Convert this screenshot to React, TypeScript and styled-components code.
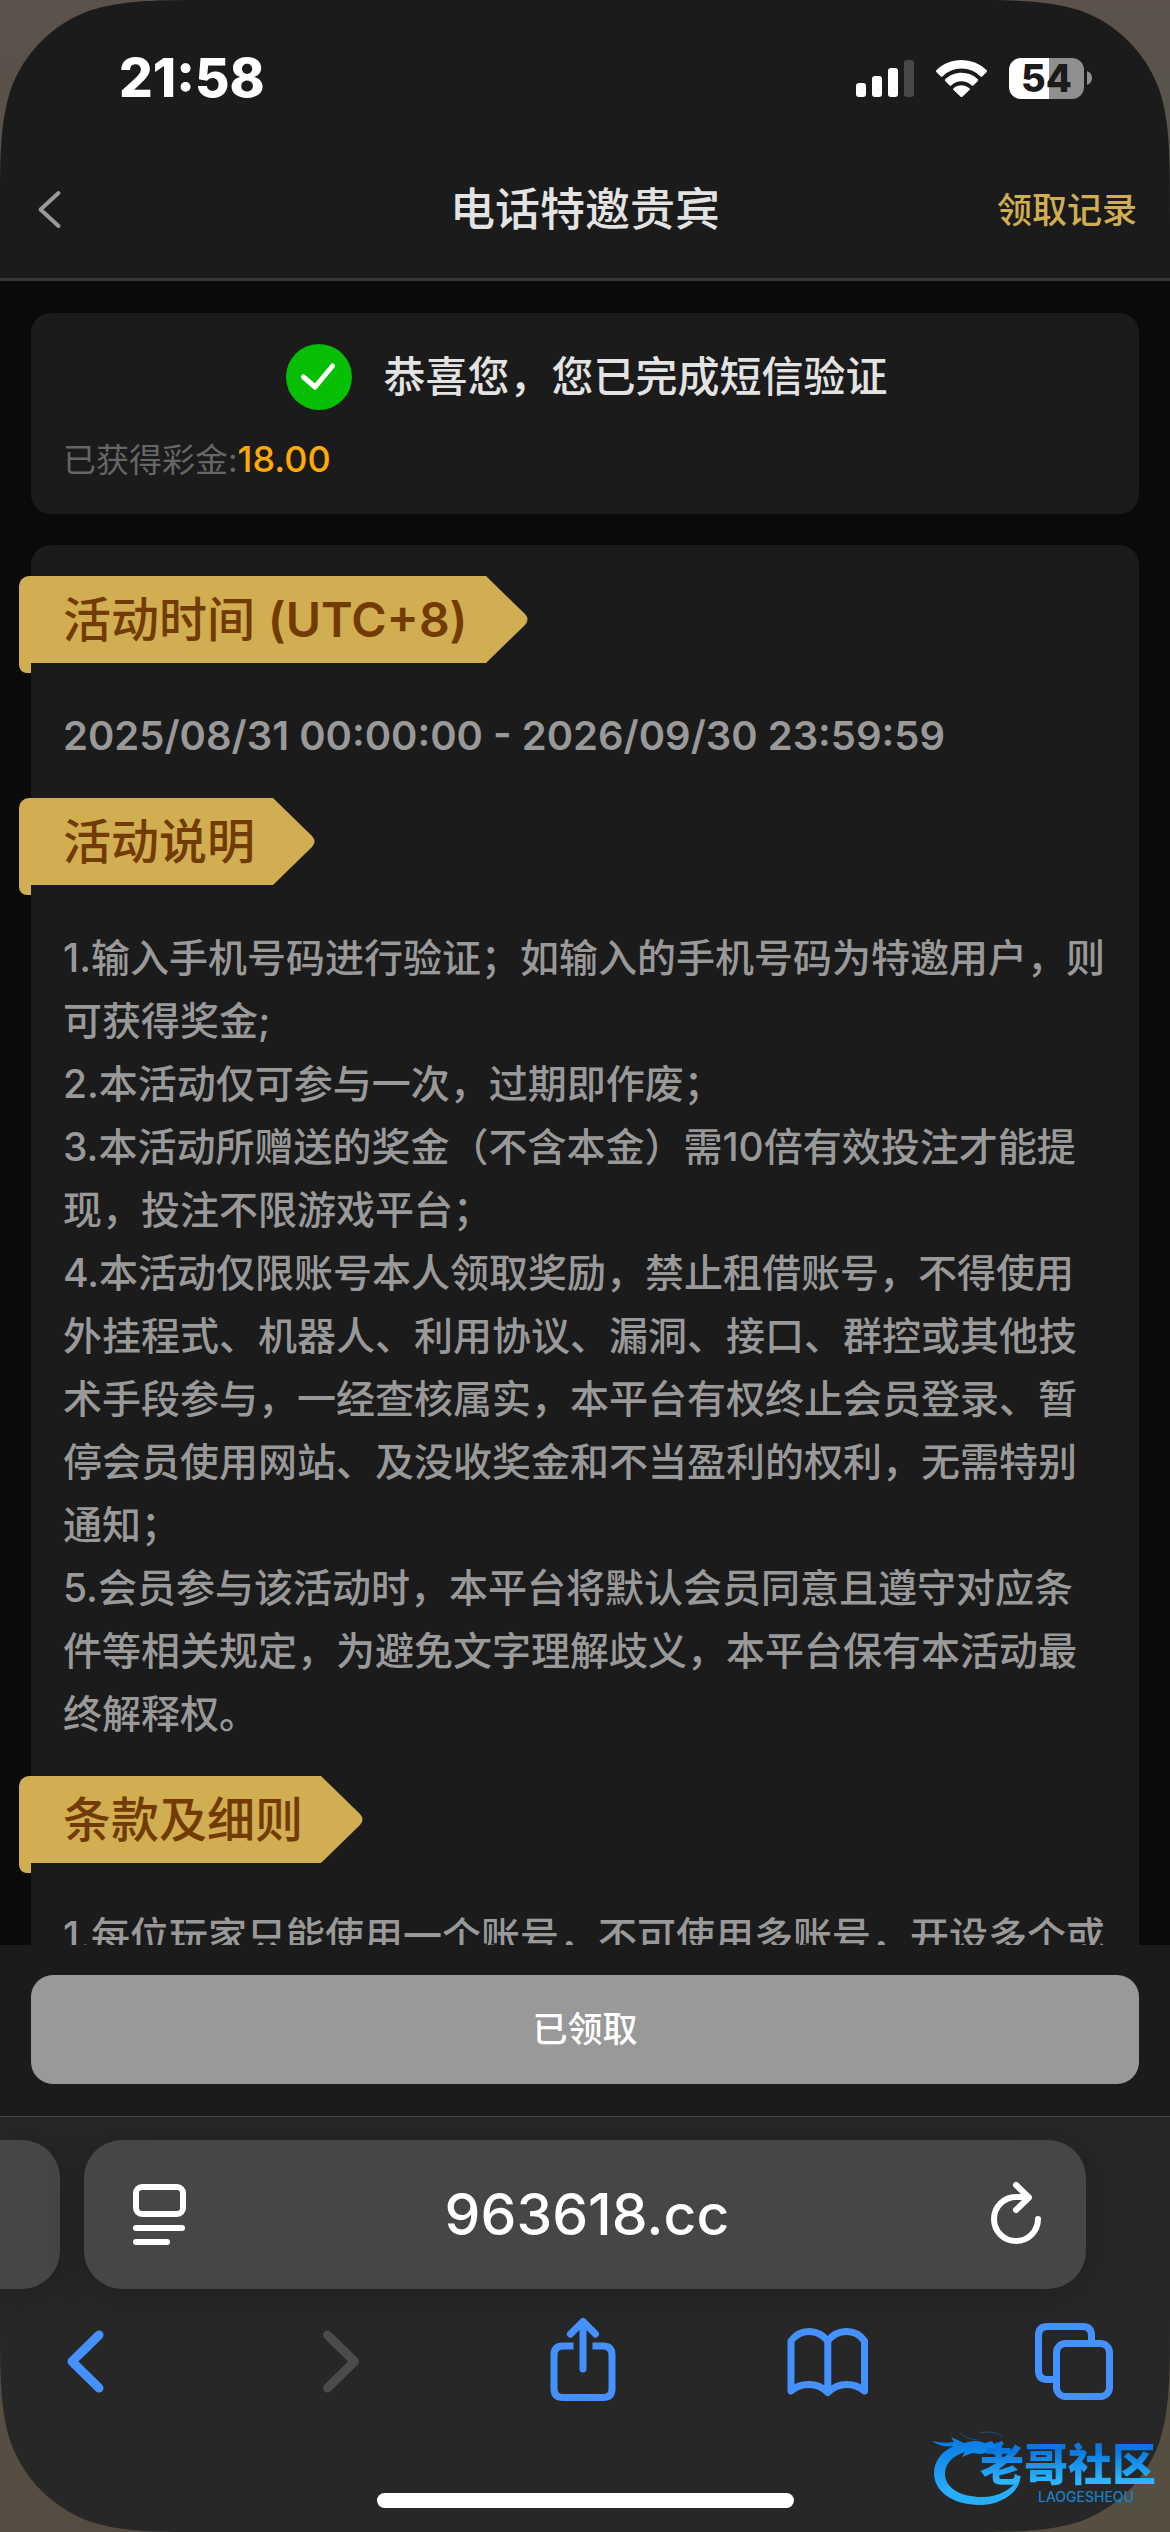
import React from 'react';
import styled, { createGlobalStyle } from 'styled-components';

const font = `Inter, "Noto Sans CJK SC", sans-serif`;

const GlobalStyle = createGlobalStyle`
  * { box-sizing: border-box; }
  html, body { margin: 0; padding: 0; background: #0a0a0a; }
  body { font-family: ${font}; font-weight: 500; -webkit-font-smoothing: antialiased; }
  button { font: inherit; border: 0; padding: 0; background: none; cursor: pointer; }
  h1, h2, p { margin: 0; font-weight: 500; }
  svg { display: block; flex: none; }
`;

const Screen = styled.div`
  position: relative;
  display: flex;
  flex-direction: column;
  height: 100vh;
  overflow: hidden;
  background: #0a0a0a;
`;

const StatusBar = styled.div`
  display: flex;
  justify-content: space-between;
  align-items: center;
  height: 144px;
  padding: 12px 78px 0 119px;
  background: #1b1b1b;
  color: #fff;
`;

const Clock = styled.time`
  font-size: 53px;
  font-weight: 800;
  line-height: 60px;
`;

const StatusIcons = styled.div`
  display: flex;
  align-items: center;
  gap: 22px;
`;

const Battery = styled.div`
  display: flex;
  align-items: center;
  gap: 3px;
`;

const BatteryBody = styled.div`
  width: 75px;
  height: 41px;
  border-radius: 12px;
  background: linear-gradient(to right, #fff 54%, #8f8f8f 54%);
  color: #1b1b1b;
  font-size: 38px;
  font-weight: 800;
  line-height: 41px;
  text-align: center;
`;

const NavBar = styled.header`
  display: grid;
  grid-template-columns: 1fr auto 1fr;
  align-items: center;
  height: 137px;
  padding: 0 33px 2px;
  border-bottom: 3px solid #363636;
  background: #1b1b1b;
`;

const BackButton = styled.button`
  justify-self: start;
`;

const Title = styled.h1`
  color: #e3e3e3;
  font-size: 45px;
  line-height: 60px;
`;

const RecordsLink = styled.a`
  justify-self: end;
  color: #d0ae51;
  font-size: 35px;
  line-height: 48px;
  text-decoration: none;
`;

const Content = styled.main`
  flex: 1;
  min-height: 0;
  overflow: hidden;
  display: flex;
  flex-direction: column;
  gap: 31px;
  padding: 32px 31px 0;
`;

const Card = styled.section`
  flex: none;
  padding: 31px 28px 32px 32px;
  border-radius: 20px;
  background: #1b1b1b;
`;

const Success = styled.div`
  display: flex;
  justify-content: center;
  align-items: center;
  gap: 31px;
  height: 66px;
  color: #e3e3e3;
  font-size: 42px;
  line-height: 60px;
`;

const Bonus = styled.p`
  margin-top: 28px;
  color: #666;
  font-size: 33px;
  font-weight: 400;
  line-height: 44px;
`;

const Amount = styled.span`
  color: #ffaa09;
  font-size: 36px;
  font-weight: 500;
  line-height: 36px;
`;

const Ribbon = styled.h2`
  position: relative;
  width: fit-content;
  height: 87px;
  margin: 0 0 41px -44px;
  padding: 0 18px 0 44px;
  border-top-left-radius: 10px;
  background: #d0ae51;
  color: #713b03;
  font-size: 48px;
  line-height: 87px;
  white-space: nowrap;

  &::after {
    content: '';
    position: absolute;
    left: 0;
    top: 80px;
    width: 12px;
    height: 17px;
    border-radius: 0 0 0 8px;
    background: #d0ae51;
  }
`;

const RibbonTip = styled.svg`
  position: absolute;
  left: 100%;
  top: 0;
`;

const Zone = styled.span`
  font-weight: 600;
`;

const Copy = styled.div`
  margin-bottom: 31px;
  color: #999;
  font-size: 39px;
  line-height: 63px;
`;

const Period = styled(Copy)`
  font-size: 40px;
  font-weight: 600;
`;

const ActionBar = styled.footer`
  flex: none;
  padding: 30px 31px 32px;
  background: #1b1b1b;
`;

const ClaimButton = styled.button`
  width: 100%;
  height: 109px;
  border-radius: 22px;
  background: #999;
  color: #fff;
  font-size: 35px;
  font-weight: 500;
  line-height: 109px;
`;

const Browser = styled.div`
  flex: none;
  padding-top: 23px;
  border-top: 1px solid #444;
  background: #272727;
`;

const TabStrip = styled.div`
  display: flex;
  gap: 24px;
  padding-right: 84px;
`;

const Pill = styled.div`
  height: 149px;
  background: #464646;
  box-shadow: 0 4px 40px rgba(0, 0, 0, 0.22);
`;

const PreviousTab = styled(Pill)`
  width: 60px;
  border-radius: 0 38px 38px 0;
`;

const AddressBar = styled(Pill)`
  flex: 1;
  display: grid;
  grid-template-columns: 1fr auto 1fr;
  align-items: center;
  padding: 0 42px 0 46px;
  border-radius: 38px;
`;

const AddressButton = styled.button<{ $end?: boolean }>`
  justify-self: ${(p) => (p.$end ? 'end' : 'start')};
`;

const Address = styled.span`
  color: #fff;
  font-size: 57px;
  line-height: 70px;
`;

const Toolbar = styled.nav`
  display: flex;
  justify-content: space-between;
  padding: 27px 52px 0 41px;
`;

const ToolButton = styled.button<{ $dim?: boolean }>`
  width: 88px;
  height: 88px;
  color: ${(p) => (p.$dim ? '#4b4b4b' : '#4591ff')};
`;

const HomeIndicator = styled.div`
  width: 417px;
  height: 15px;
  margin: 89px auto 24px;
  border-radius: 8px;
  background: #fff;
`;

const Corner = styled.svg<{ $v: 'top' | 'bottom'; $h: 'left' | 'right' }>`
  position: absolute;
  ${(p) => p.$v}: 0;
  ${(p) => p.$h}: 0;
  transform: scale(${(p) => (p.$h === 'left' ? 1 : -1)}, ${(p) => (p.$v === 'top' ? 1 : -1)});
  pointer-events: none;
`;

const Watermark = styled.div`
  position: absolute;
  right: 14px;
  bottom: 26px;
  width: 224px;
  height: 78px;
`;

const Dragon = styled.svg`
  position: absolute;
  inset: 0;
`;

const WatermarkText = styled.div`
  position: relative;
  display: flex;
  flex-direction: column;
  align-items: flex-end;
  padding-top: 14px;
`;

const WatermarkName = styled.span`
  background: linear-gradient(#0a78e0 20%, #2cb6ff 85%);
  background-clip: text;
  color: transparent;
  font-size: 44px;
  font-weight: 900;
  line-height: 46px;
`;

const WatermarkLatin = styled.span`
  margin-right: 22px;
  color: #1c7fc4;
  font-size: 14px;
  line-height: 18px;
`;

const line = {
  fill: 'none',
  stroke: 'currentColor',
  strokeLinecap: 'round' as const,
  strokeLinejoin: 'round' as const,
};

function ScreenCorner({ v, h, from, to }: { v: 'top' | 'bottom'; h: 'left' | 'right'; from: string; to: string }) {
  const id = `corner-${v}-${h}`;
  return (
    <Corner $v={v} $h={h} width="217" height="217" viewBox="0 0 217 217" aria-hidden="true">
      <defs>
        <linearGradient id={id} x1="0" y1="0" x2="0" y2="1">
          <stop offset="0" stopColor={from} />
          <stop offset="0.5" stopColor={to} />
        </linearGradient>
      </defs>
      <path
        fill={`url(#${id})`}
        d="M0 0H217C154.6 0 123.3 0 89.7 10.6C52.9 24 24 52.9 10.6 89.7C0 123.3 0 154.6 0 217Z"
      />
    </Corner>
  );
}

function SectionRibbon({ children }: { children: React.ReactNode }) {
  return (
    <Ribbon>
      {children}
      <RibbonTip width="42" height="87" viewBox="0 0 42 87" aria-hidden="true">
        <path fill="#d0ae51" d="M-1 0H0L39 38Q44 43.500 39 49L0 87H-1Z" />
      </RibbonTip>
    </Ribbon>
  );
}

const rules = [
  '1.输入手机号码进行验证；如输入的手机号码为特邀用户，则可获得奖金;',
  '2.本活动仅可参与一次，过期即作废；',
  '3.本活动所赠送的奖金（不含本金）需10倍有效投注才能提现，投注不限游戏平台；',
  '4.本活动仅限账号本人领取奖励，禁止租借账号，不得使用外挂程式、机器人、利用协议、漏洞、接口、群控或其他技术手段参与，一经查核属实，本平台有权终止会员登录、暂停会员使用网站、及没收奖金和不当盈利的权利，无需特别通知；',
  '5.会员参与该活动时，本平台将默认会员同意且遵守对应条件等相关规定，为避免文字理解歧义，本平台保有本活动最终解释权。',
];

export default function App() {
  return (
    <Screen lang="zh-CN">
      <GlobalStyle />
      <StatusBar>
        <Clock>21:58</Clock>
        <StatusIcons>
          <svg width="58" height="37" viewBox="0 0 58 37" fill="#fff" aria-hidden="true">
            <rect x="0" y="23" width="10" height="14" rx="3" />
            <rect x="16" y="16" width="10" height="21" rx="3" />
            <rect x="32" y="8" width="10" height="29" rx="3" />
            <rect x="48" y="0" width="10" height="37" rx="3" fill="#484848" />
          </svg>
          <svg width="51" height="37" viewBox="0 0 51 37" fill="#fff" aria-hidden="true">
            <path d="M25.500 0C15.800 0 7 3.800.6 10a1.500 1.500 0 0 0 0 2.200l4 4a1.500 1.500 0 0 0 2.100 0A27 27 0 0 1 25.500 8.500a27 27 0 0 1 18.800 7.700 1.500 1.500 0 0 0 2.100 0l4-4a1.500 1.500 0 0 0 0-2.200A36 36 0 0 0 25.500 0Z" />
            <path d="M25.500 12.700c-6.200 0-11.900 2.400-16.100 6.300a1.500 1.500 0 0 0 0 2.200l4 4a1.500 1.500 0 0 0 2.100 0 14.600 14.600 0 0 1 20 0 1.500 1.500 0 0 0 2.100 0l4-4a1.500 1.500 0 0 0 0-2.200 23.600 23.600 0 0 0-16.100-6.300Z" />
            <path d="M25.500 25.300c-2.900 0-5.500 1-7.600 2.700a1.500 1.500 0 0 0-.1 2.300l6.600 6.300a1.500 1.500 0 0 0 2.200 0l6.600-6.300a1.500 1.500 0 0 0-.1-2.300 12 12 0 0 0-7.600-2.700Z" />
          </svg>
          <Battery>
            <BatteryBody>54</BatteryBody>
            <svg width="5" height="14" viewBox="0 0 5 14" aria-hidden="true">
              <path d="M0 0Q5 2 5 7T0 14Z" fill="#8f8f8f" />
            </svg>
          </Battery>
        </StatusIcons>
      </StatusBar>

      <NavBar>
        <BackButton aria-label="返回">
          <svg width="32" height="44" viewBox="0 0 32 44" stroke="#999" fill="none" strokeWidth="4" strokeLinecap="round" strokeLinejoin="round">
            <path d="M25.500 5L7.500 21.500L25.500 38" />
          </svg>
        </BackButton>
        <Title>电话特邀贵宾</Title>
        <RecordsLink href="#records">领取记录</RecordsLink>
      </NavBar>

      <Content>
        <Card>
          <Success>
            <svg width="66" height="66" viewBox="0 0 66 66" aria-hidden="true">
              <circle cx="33" cy="33" r="33" fill="#06bf04" />
              <path d="M17.500 33L29 43L46.500 22" fill="none" stroke="#fff" strokeWidth="5" strokeLinecap="round" strokeLinejoin="round" />
            </svg>
            <span>恭喜您，您已完成短信验证</span>
          </Success>
          <Bonus>
            已获得彩金:<Amount>18.00</Amount>
          </Bonus>
        </Card>

        <Card>
          <SectionRibbon>
            活动时间 <Zone>(UTC+8)</Zone>
          </SectionRibbon>
          <Period>2025/08/31 00:00:00 - 2026/09/30 23:59:59</Period>
          <SectionRibbon>活动说明</SectionRibbon>
          <Copy>
            {rules.map((rule) => (
              <p key={rule}>{rule}</p>
            ))}
          </Copy>
          <SectionRibbon>条款及细则</SectionRibbon>
          <Copy>
            <p>1.每位玩家只能使用一个账号，不可使用多账号，开设多个或</p>
          </Copy>
        </Card>
      </Content>

      <ActionBar>
        <ClaimButton>已领取</ClaimButton>
      </ActionBar>

      <Browser>
        <TabStrip>
          <PreviousTab />
          <AddressBar>
            <AddressButton aria-label="页面菜单">
              <svg width="60" height="68" viewBox="0 0 60 68" {...line} stroke="#fff" strokeWidth="6">
                <rect x="6" y="6" width="47" height="27" rx="6" />
                <path d="M6 47H52M6 61H37" />
              </svg>
            </AddressButton>
            <Address>963618.cc</Address>
            <AddressButton $end aria-label="重新载入">
              <svg width="56" height="68" viewBox="0 0 56 68" {...line} stroke="#fff" strokeWidth="6">
                <path d="M50 38A22 22 0 1 1 28 16H40M28 4L41 16.500L28 29" />
              </svg>
            </AddressButton>
          </AddressBar>
        </TabStrip>
        <Toolbar>
          <ToolButton aria-label="后退">
            <svg width="88" height="88" viewBox="0 0 88 88" {...line} strokeWidth="9">
              <path d="M58 19L31 45.500L58 72" />
            </svg>
          </ToolButton>
          <ToolButton $dim aria-label="前进">
            <svg width="88" height="88" viewBox="0 0 88 88" {...line} strokeWidth="9">
              <path d="M39.500 19L66.500 45.500L39.500 72" />
            </svg>
          </ToolButton>
          <ToolButton aria-label="分享">
            <svg width="88" height="88" viewBox="0 0 88 88" {...line} strokeWidth="7">
              <path strokeLinecap="butt" d="M37.500 30H27Q18 30 18 39V72.500Q18 81.500 27 81.500H67Q76 81.500 76 72.500V39Q76 30 67 30H56.500" />
              <path d="M47 53V6M34.500 18L47 5.500L59.500 18" />
            </svg>
          </ToolButton>
          <ToolButton aria-label="书签">
            <svg width="88" height="88" viewBox="0 0 88 88" {...line} strokeWidth="7">
              <path d="M8 75V25Q15 15.500 26 15.500T44.800 25Q52 15.500 63.500 15.500T81.500 25V75Q74 68.500 63.500 68.500T44.800 76.500Q37 68.500 26 68.500T8 75ZM44.800 25V76" />
            </svg>
          </ToolButton>
          <ToolButton aria-label="标签页">
            <svg width="88" height="88" viewBox="0 0 88 88" {...line} strokeWidth="7">
              <path strokeLinecap="butt" d="M61.500 27V19.500Q61.500 10.500 52.500 10.500H17.500Q8.500 10.500 8.500 19.500V54.500Q8.500 63.500 17.500 63.500H26" />
              <rect x="26.500" y="27.500" width="53" height="53" rx="9" />
            </svg>
          </ToolButton>
        </Toolbar>
        <HomeIndicator />
      </Browser>

      <ScreenCorner v="top" h="left" from="#5a524b" to="#5a5149" />
      <ScreenCorner v="top" h="right" from="#5c514c" to="#57544b" />
      <ScreenCorner v="bottom" h="left" from="#544b41" to="#564d43" />
      <ScreenCorner v="bottom" h="right" from="#564e41" to="#574e42" />

      <Watermark>
        <Dragon width="224" height="78" viewBox="0 0 224 78" aria-hidden="true">
          <defs>
            <linearGradient id="dragon" x1="0" y1="0" x2="0" y2="1">
              <stop offset="0.1" stopColor="#0b7fe6" />
              <stop offset="0.8" stopColor="#27aefc" />
            </linearGradient>
          </defs>
          <path
            fill="url(#dragon)"
            d="M0 13Q12 16 22 14L19 9L32 15Q44 11 53 15L60 13L62 16L70 13L72 16L66 20L70 24L64 27L55 24L50 26L40 25L30 29L33 24C20 28 13 36 13 46C13 60 29 69 50 69C68 69 82 60 88 48C89 63 70 77 48 77C20 77 2 63 2 45C2 33 10 23 22 18Q9 20 0 13Z"
          />
          <path d="M28 5Q34 11 46 12M48 5Q60 2 70 8" fill="none" stroke="#1c4f78" strokeWidth="1" />
        </Dragon>
        <WatermarkText>
          <WatermarkName>老哥社区</WatermarkName>
          <WatermarkLatin>LAOGESHEQU</WatermarkLatin>
        </WatermarkText>
      </Watermark>
    </Screen>
  );
}
